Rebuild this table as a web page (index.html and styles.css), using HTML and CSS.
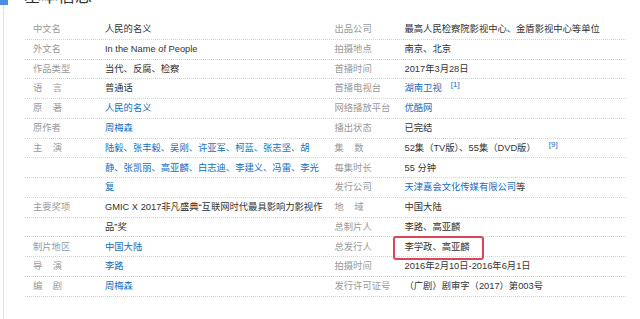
FILE: index.html
```html
<!DOCTYPE html>
<html lang="zh-CN">
<head>
<meta charset="utf-8">
<title>基本信息</title>
<link rel="stylesheet" href="styles.css">
</head>
<body>
<div class="card">
  <h2 class="title"><span class="mark"></span><span class="title-text">基本信息</span></h2>
  <div class="info">
    <dl class="col col-left">
      <div class="item"><dt>中文名</dt><dd>人民的名义</dd></div>
      <div class="item"><dt>外文名</dt><dd>In the Name of People</dd></div>
      <div class="item"><dt>作品类型</dt><dd>当代、反腐、检察</dd></div>
      <div class="item"><dt>语<span class="gap"></span>言</dt><dd>普通话</dd></div>
      <div class="item"><dt>原<span class="gap"></span>著</dt><dd><a class="link">人民的名义</a></dd></div>
      <div class="item"><dt>原作者</dt><dd><a class="link">周梅森</a></dd></div>
      <div class="item"><dt>主<span class="gap"></span>演</dt><dd class="link">陆毅、张丰毅、吴刚、许亚军、柯蓝、张志坚、胡静、张凯丽、高亚麟、白志迪、李建义、冯雷、李光复</dd></div>
      <div class="item"><dt>主要奖项</dt><dd>GMIC X 2017非凡盛典“互联网时代最具影响力影视作品”奖</dd></div>
      <div class="item"><dt>制片地区</dt><dd><a class="link">中国大陆</a></dd></div>
      <div class="item"><dt>导<span class="gap"></span>演</dt><dd><a class="link">李路</a></dd></div>
      <div class="item"><dt>编<span class="gap"></span>剧</dt><dd><a class="link">周梅森</a></dd></div>
    </dl>
    <dl class="col col-right">
      <div class="item"><dt>出品公司</dt><dd>最高人民检察院影视中心、金盾影视中心等单位</dd></div>
      <div class="item"><dt>拍摄地点</dt><dd>南京、北京</dd></div>
      <div class="item"><dt>首播时间</dt><dd>2017年3月28日</dd></div>
      <div class="item"><dt>首播电视台</dt><dd><a class="link">湖南卫视</a><sup class="ref ref-1">[1]</sup></dd></div>
      <div class="item"><dt>网络播放平台</dt><dd><a class="link">优酷网</a></dd></div>
      <div class="item"><dt>播出状态</dt><dd>已完结</dd></div>
      <div class="item"><dt>集<span class="gap"></span>数</dt><dd>52集（TV版）、55集（DVD版）<sup class="ref ref-9">[9]</sup></dd></div>
      <div class="item"><dt>每集时长</dt><dd>55 分钟</dd></div>
      <div class="item"><dt>发行公司</dt><dd><a class="link">天津嘉会文化传媒有限公司</a>等</dd></div>
      <div class="item"><dt>地<span class="gap"></span>域</dt><dd>中国大陆</dd></div>
      <div class="item"><dt>总制片人</dt><dd>李路、高亚麟</dd></div>
      <div class="item"><dt>总发行人</dt><dd><span class="hl">李学政、高亚麟</span></dd></div>
      <div class="item"><dt>拍摄时间</dt><dd>2016年2月10日-2016年6月1日</dd></div>
      <div class="item"><dt>发行许可证号</dt><dd>（广剧）剧审字（2017）第003号</dd></div>
    </dl>
  </div>
</div>
</body>
</html>
```
FILE: styles.css
```css
html, body {
  margin: 0;
  padding: 0;
  background: #fff;
}

body {
  font-family: "Liberation Sans", "Noto Sans CJK SC", sans-serif;
  font-size: 9.3px;
  color: #333;
  overflow: hidden;
}

.card {
  display: flow-root;
  margin-left: 3px;
  border-left: 1px solid #e3e3e3;
  min-height: 100vh;
}

.title {
  display: flex;
  align-items: stretch;
  gap: 16px;
  height: 17px;
  margin: -12px 0 0 -4px;
  font-size: 17px;
  line-height: 17px;
  font-weight: normal;
  color: #333;
}

.mark {
  width: 8px;
  background: #4b8fe0;
}

.info {
  display: flex;
  width: 603px;
  margin: 15.2px 0 0 20px;
}

.col {
  width: 301.5px;
  margin: 0;
  line-height: 19.77px;
  background-image:
    repeating-linear-gradient(90deg, #fff 0 1px, transparent 1px 2px),
    repeating-linear-gradient(180deg, transparent 0 18.77px, #d4d4d4 18.77px 19.77px);
}

.item {
  display: flex;
}

dt {
  flex: none;
  width: 72px;
  padding-left: 9px;
  color: #999;
  white-space: nowrap;
}

.col-right dt {
  width: 70px;
}

dd {
  flex: 1;
  min-width: 0;
  margin: 0;
  color: #333;
}

.gap {
  display: inline-block;
  width: 10.5px;
}

.link {
  color: #136ec2;
  text-decoration: none;
}

.ref {
  color: #136ec2;
  font-size: 8px;
  line-height: 0;
  vertical-align: 4px;
}

.ref-1 {
  margin-left: 9px;
}

.ref-9 {
  margin-left: 13px;
}

.hl {
  position: relative;
}

.hl::after {
  content: "";
  position: absolute;
  left: -12px;
  right: -14px;
  top: -6px;
  bottom: -8px;
  border: 2px solid #dc4459;
  border-radius: 3px;
}
```
